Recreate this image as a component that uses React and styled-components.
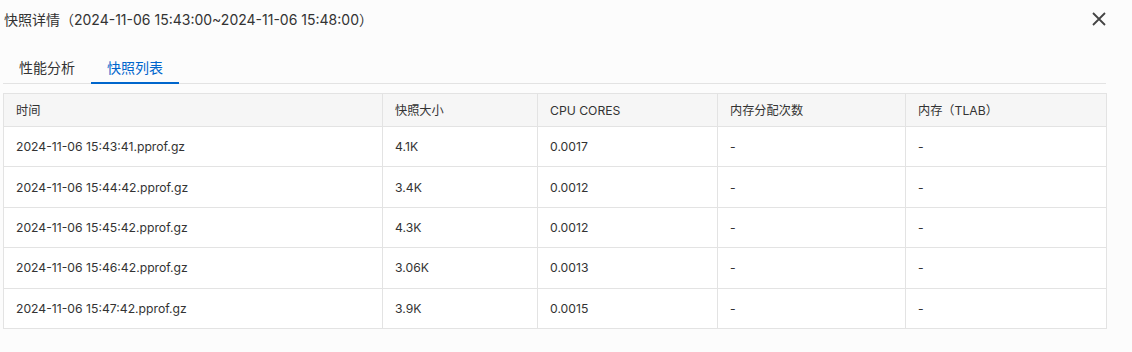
import styled, { createGlobalStyle } from 'styled-components';

const GlobalStyle = createGlobalStyle`
  body {
    margin: 0;
    background: #fcfcfc;
    font-family: Inter, 'Noto Sans CJK SC', sans-serif;
    color: #333;
  }
`;

const Container = styled.div`
  width: 1132px;
  height: 352px;
  box-sizing: border-box;
  padding: 0 26px 0 3px;
`;
const Header = styled.div`
  height: 38px;
  display: flex;
  align-items: center;
  justify-content: space-between;
`;
const Title = styled.div`
  font-size: 14px;
  color: #333;
  padding-left: 1px;
`;
const Close = styled.button`
  border: none;
  background: none;
  padding: 0;
  width: 14px;
  height: 14px;
  display: flex;
  cursor: pointer;
`;
const Tabs = styled.div`
  margin-top: 16px;
  display: flex;
  border-bottom: 1px solid #e3e3e3;
`;
const Tab = styled.div`
  padding: 0 16px;
  height: 30px;
  line-height: 27px;
  font-size: 14px;
  box-sizing: border-box;
  color: ${(p) => (p.active ? '#0066cc' : '#333')};
  border-bottom: 2px solid ${(p) => (p.active ? '#0066cc' : 'transparent')};
  margin-bottom: -1px;
`;
const Table = styled.table`
  margin-top: 9px;
  width: 1103px;
  border-collapse: collapse;
  table-layout: fixed;
  font-size: 12.2px;
  background: #fff;
`;
const Th = styled.th`
  height: 32px;
  padding: 0 12px;
  text-align: left;
  font-weight: 400;
  color: #333;
  background: #f6f6f6;
  border: 1px solid #e3e3e3;
`;
const Td = styled.td`
  height: 39.4px;
  padding: 0 12px;
  color: #333;
  border: 1px solid #e3e3e3;
`;

const columns = [
  { title: '时间', width: 379 },
  { title: '快照大小', width: 155 },
  { title: 'CPU CORES', width: 180 },
  { title: '内存分配次数', width: 188 },
  { title: '内存（TLAB）', width: 201 },
];

const rows = [
  ['2024-11-06 15:43:41.pprof.gz', '4.1K', '0.0017', '-', '-'],
  ['2024-11-06 15:44:42.pprof.gz', '3.4K', '0.0012', '-', '-'],
  ['2024-11-06 15:45:42.pprof.gz', '4.3K', '0.0012', '-', '-'],
  ['2024-11-06 15:46:42.pprof.gz', '3.06K', '0.0013', '-', '-'],
  ['2024-11-06 15:47:42.pprof.gz', '3.9K', '0.0015', '-', '-'],
];

const App = () => {
  return (
    <Container>
      <GlobalStyle />
      <Header>
        <Title>快照详情（2024-11-06 15:43:00~2024-11-06 15:48:00）</Title>
        <Close>
          <svg width='14' height='14' viewBox='0 0 14 14'>
            <path d='M1 1L13 13M13 1L1 13' stroke='#444' strokeWidth='1.8' />
          </svg>
        </Close>
      </Header>
      <Tabs>
        <Tab>性能分析</Tab>
        <Tab active>快照列表</Tab>
      </Tabs>
      <Table>
        <colgroup>
          {columns.map((c) => (
            <col key={c.title} style={{ width: c.width }} />
          ))}
        </colgroup>
        <thead>
          <tr>
            {columns.map((c) => (
              <Th key={c.title}>{c.title}</Th>
            ))}
          </tr>
        </thead>
        <tbody>
          {rows.map((r) => (
            <tr key={r[0]}>
              {r.map((v, i) => (
                <Td key={i}>{v}</Td>
              ))}
            </tr>
          ))}
        </tbody>
      </Table>
    </Container>
  );
};

export default App;
